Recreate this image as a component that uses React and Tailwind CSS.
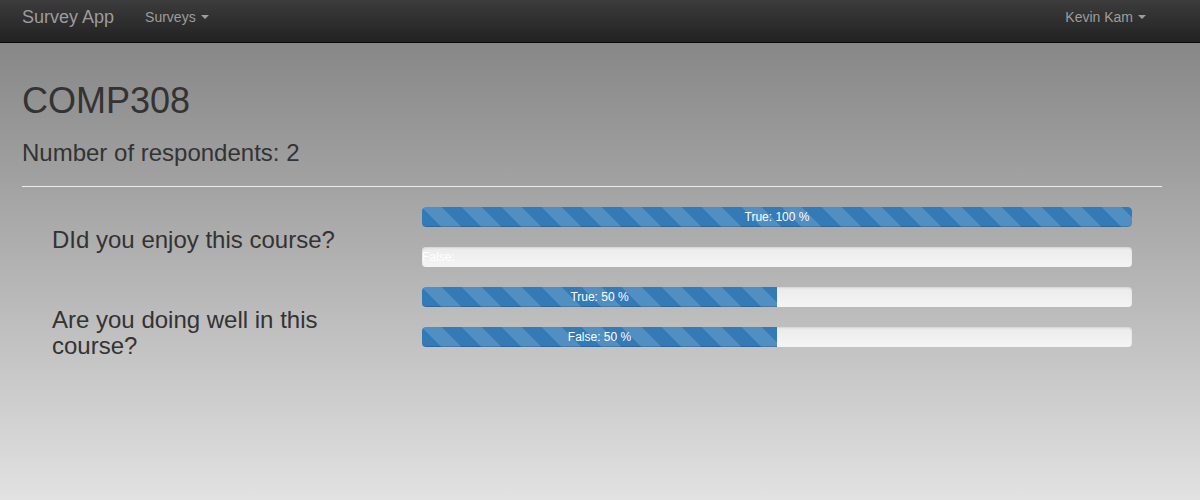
import React from 'react';

const stripes = {
  backgroundImage:
    'linear-gradient(45deg, rgba(255,255,255,.15) 25%, transparent 25%, transparent 50%, rgba(255,255,255,.15) 50%, rgba(255,255,255,.15) 75%, transparent 75%, transparent)',
  backgroundSize: '40px 40px',
};

const questions = [
  {
    text: 'DId you enjoy this course?',
    answers: [
      { label: 'True', pct: 100 },
      { label: 'False', pct: 0 },
    ],
  },
  {
    text: 'Are you doing well in this course?',
    answers: [
      { label: 'True', pct: 50 },
      { label: 'False', pct: 50 },
    ],
  },
];

const Caret = () => (
  <span className="inline-block ml-[5px] align-middle w-0 h-0 border-t-[4px] border-t-[#9d9d9d] border-x-[4px] border-x-transparent" />
);

const ProgressBar = ({ label, pct }) => (
  <div className="h-5 mb-5 rounded-[4px] bg-gradient-to-b from-[#ebebeb] to-[#f5f5f5] shadow-[inset_0_1px_2px_rgba(0,0,0,0.1)]">
    <div
      className={`h-full flex items-center text-xs text-white whitespace-nowrap leading-5 rounded-l-[4px] shadow-[inset_0_-1px_0_rgba(0,0,0,0.15)] ${
        pct >= 100 ? 'rounded-r-[4px]' : ''
      } ${pct > 0 ? 'justify-center' : 'justify-start'}`}
      style={{ width: `${pct}%`, ...stripes, backgroundColor: '#337ab7' }}
    >
      {pct > 0 ? `${label}: ${pct} %` : `${label}:`}
    </div>
  </div>
);

export default function App() {
  return (
    <div className="min-h-[500px] font-['Liberation_Sans',Arial,sans-serif] text-[#333] bg-gradient-to-b from-[#7f7f7f] to-[#e2e2e2]">
      {/* Navbar */}
      <nav className="h-[43px] pb-2 flex items-center border-b border-[#080808] bg-gradient-to-b from-[#3c3c3c] to-[#222]">
        <span className="ml-[22px] text-[18px] text-[#9d9d9d]">Survey App</span>
        <span className="ml-[31px] text-sm text-[#9d9d9d] flex items-center">
          Surveys <Caret />
        </span>
        <span className="ml-auto mr-[54px] text-sm text-[#9d9d9d] flex items-center">
          Kevin Kam <Caret />
        </span>
      </nav>

      <div className="px-[22px] mr-[16px]">
        <h1 className="mt-[38px] text-[36px] leading-[1.1]">COMP308</h1>
        <h3 className="mt-[19px] text-2xl leading-[1.1]">Number of respondents: 2</h3>
        <hr className="mt-5 border-t border-[#eee]" />

        <div className="mt-5">
          {questions.map((q) => (
            <div key={q.text} className="flex">
              <div className="w-[400px] pl-[30px] pr-[70px] shrink-0">
                <h3 className="mt-5 mb-2.5 text-2xl leading-[1.1]">{q.text}</h3>
              </div>
              <div className="w-[710px]">
                {q.answers.map((a) => (
                  <ProgressBar key={a.label} label={a.label} pct={a.pct} />
                ))}
              </div>
            </div>
          ))}
        </div>
      </div>
    </div>
  );
}
